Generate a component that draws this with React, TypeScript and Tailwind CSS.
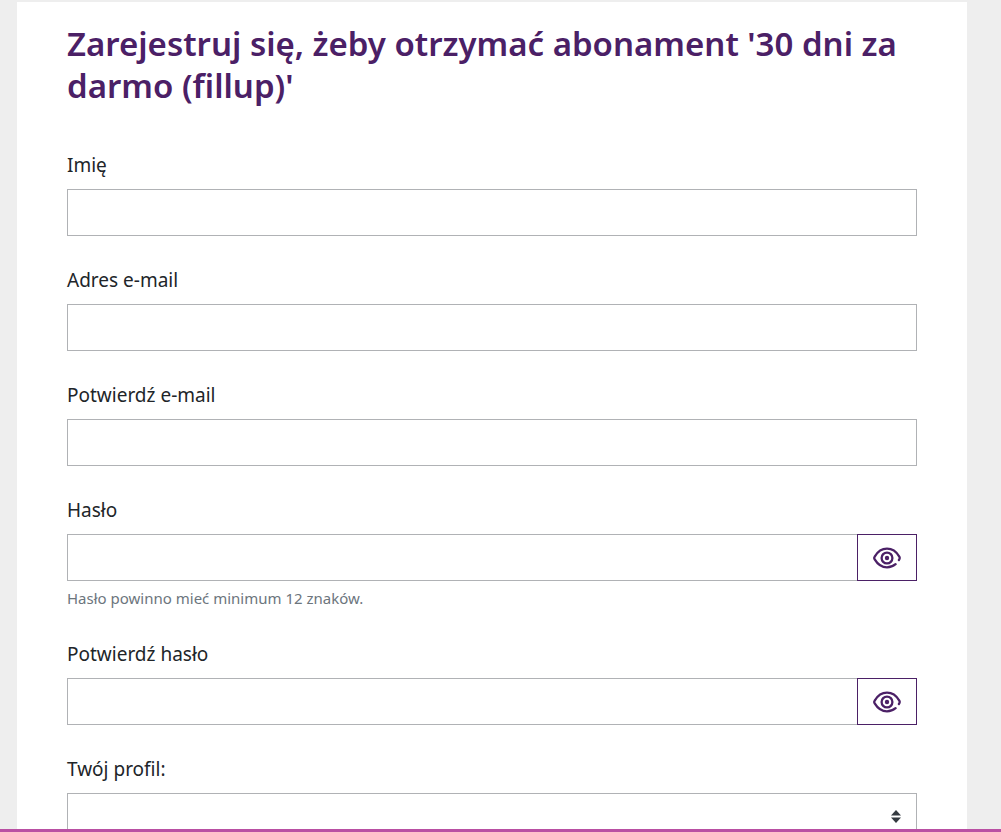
import { useState } from "react";
import type { ReactNode } from "react";

const controlStyles =
  "h-[47px] w-full min-w-0 appearance-none rounded-none border border-[#b0b2b5] bg-white px-4 text-[19px] text-[#212529] outline-none focus:border-[#4b2066]";

function EyeIcon() {
  return (
    <svg viewBox="0 0 28 22" className="h-[22px] w-7" fill="none" stroke="currentColor" strokeWidth="2.3" strokeLinecap="round" aria-hidden="true">
      <path d="M22.6 17.2C20.2 19.2 17.2 20.3 14 20.3C8.4 20.3 4.2 16.6 1.7 12.4C1.1 11.5 1.1 10.5 1.7 9.6C4.2 5.4 8.4 1.7 14 1.7C19.6 1.7 23.8 5.4 26.3 9.6C26.9 10.6 26.8 11.8 25.9 13" />
      <circle cx="14" cy="11" r="5.4" />
      <circle cx="14" cy="11" r="2.2" fill="currentColor" stroke="none" />
    </svg>
  );
}

function SortIcon() {
  return (
    <svg viewBox="0 0 10 13" className="pointer-events-none absolute top-[17px] right-4 h-[13px] w-[10px] fill-[#343a40]" aria-hidden="true">
      <path d="M5 0L10 5.5H0Z" />
      <path d="M0 7.5H10L5 13Z" />
    </svg>
  );
}

function Field({ id, label, hint, children }: { id: string; label: string; hint?: string; children: ReactNode }) {
  return (
    <div>
      <label htmlFor={id} className="mb-[9px] block text-[19px] leading-[30px] text-[#212529]">
        {label}
      </label>
      {children}
      {hint && (
        <p id={`${id}-hint`} className="mt-[5px] text-[15px] leading-6 text-[#6c757d]">
          {hint}
        </p>
      )}
    </div>
  );
}

function PasswordInput({ id, describedBy }: { id: string; describedBy?: string }) {
  const [visible, setVisible] = useState(false);

  return (
    <div className="flex">
      <input
        id={id}
        name={id}
        type={visible ? "text" : "password"}
        autoComplete="new-password"
        aria-describedby={describedBy}
        className={`${controlStyles} border-r-0`}
      />
      <button
        type="button"
        aria-label="Pokaż hasło"
        aria-pressed={visible}
        onClick={() => setVisible(!visible)}
        className="flex h-[47px] w-[60px] shrink-0 items-center justify-center border border-[#4b2066] text-[#4b2066]"
      >
        <EyeIcon />
      </button>
    </div>
  );
}

export default function App() {
  return (
    <div className="flex h-screen flex-col bg-[#eeeeee] font-['Noto_Sans',sans-serif]">
      <main className="min-h-0 flex-1 overflow-y-auto pt-0.5 pr-[34px] pl-[17px] [scrollbar-width:none]">
        <div className="bg-white px-[50px] pt-[21px] pb-12">
          <h1 className="text-[33px] leading-[42px] font-semibold text-[#4b2066]">
            Zarejestruj się, żeby otrzymać abonament '30 dni za darmo (fillup)'
          </h1>

          <form className="mt-[43px] flex flex-col gap-[29px]" onSubmit={(e) => e.preventDefault()}>
            <Field id="imie" label="Imię">
              <input id="imie" name="imie" type="text" autoComplete="given-name" className={controlStyles} />
            </Field>
            <Field id="email" label="Adres e-mail">
              <input id="email" name="email" type="email" autoComplete="email" className={controlStyles} />
            </Field>
            <Field id="email2" label="Potwierdź e-mail">
              <input id="email2" name="email2" type="email" autoComplete="email" className={controlStyles} />
            </Field>
            <Field id="haslo" label="Hasło" hint="Hasło powinno mieć minimum 12 znaków.">
              <PasswordInput id="haslo" describedBy="haslo-hint" />
            </Field>
            <Field id="haslo2" label="Potwierdź hasło">
              <PasswordInput id="haslo2" />
            </Field>
            <Field id="profil" label="Twój profil:">
              <div className="relative">
                <select id="profil" name="profil" defaultValue="" className={controlStyles}>
                  <option value=""></option>
                </select>
                <SortIcon />
              </div>
            </Field>
          </form>
        </div>
      </main>
      <div className="h-[3px] shrink-0 bg-[#b94fa3]" />
    </div>
  );
}
